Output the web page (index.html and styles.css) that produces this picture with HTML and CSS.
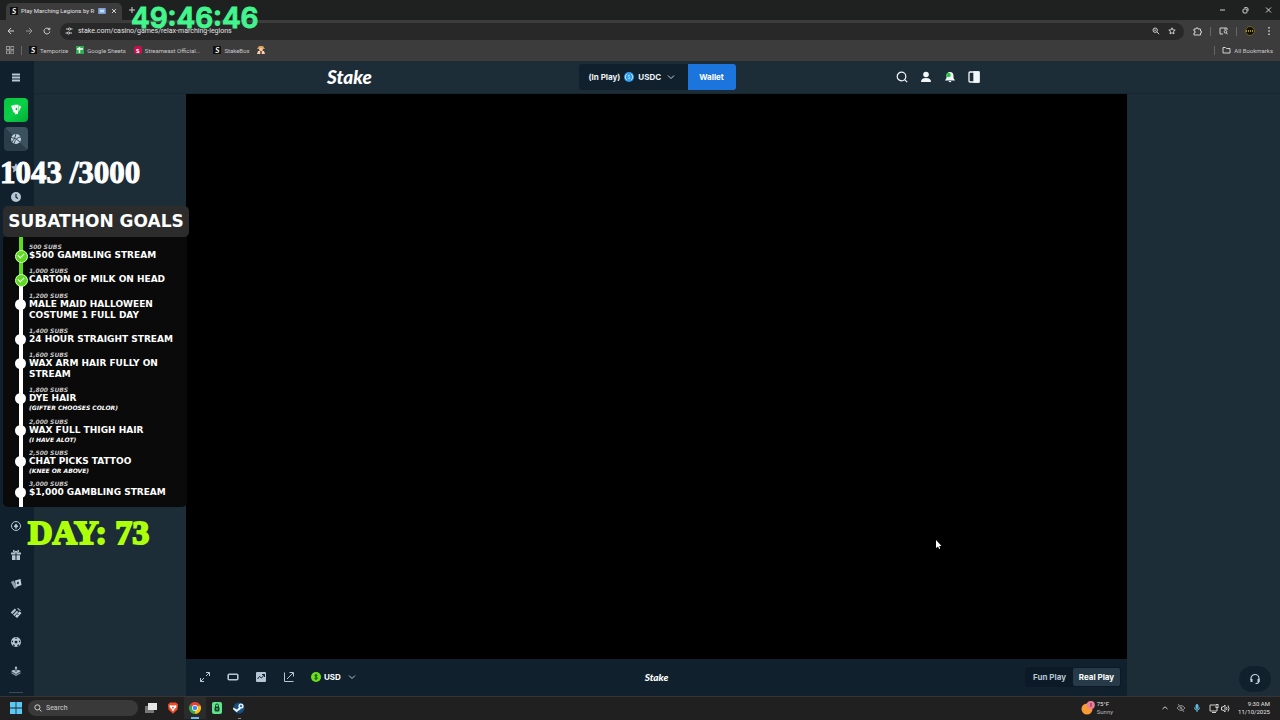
FILE: index.html
```html
<!DOCTYPE html>
<html lang="en">
<head>
    <meta charset="UTF-8">
    <meta name="viewport" content="width=device-width, initial-scale=1.0">
    <title>Play Marching Legions</title>
    <link rel="stylesheet" href="styles.css">
</head>
<body>
    <!-- Browser window -->
    <div class="tabs">
        <div class="tab">
            <span class="fav">S</span>
            <span class="tab-title">Play Marching Legions by R</span>
            <svg class="tab-badge" viewBox="0 0 9 7"><rect width="9" height="7" rx="1" fill="#7da2d6"/><rect x="2" y="2" width="5" height="3" fill="#c9dcf7"/></svg>
            <button class="plain" aria-label="Close tab"><svg width="6" height="6" viewBox="0 0 6 6"><path d="M1 1l4 4M5 1L1 5"/></svg></button>
        </div>
        <button class="plain new-tab" aria-label="New tab"><svg width="8" height="8" viewBox="0 0 8 8"><path d="M4 1v6M1 4h6"/></svg></button>
        <div class="window-buttons">
            <button class="plain" aria-label="Minimize"><svg width="7" height="8" viewBox="0 0 7 8"><path d="M1 4h5"/></svg></button>
            <button class="plain" aria-label="Restore"><svg width="7" height="8" viewBox="0 0 7 8"><rect x="1" y="3" width="4" height="4" rx="1"/><path d="M2.500 1.500h2a1.500 1.500 0 0 1 1.500 1.500v2"/></svg></button>
            <button class="plain" aria-label="Close"><svg width="7" height="8" viewBox="0 0 7 8"><path d="M1 1.500l5 5M6 1.500l-5 5"/></svg></button>
        </div>
    </div>

    <div class="toolbar">
        <button class="plain" aria-label="Back"><svg width="8" height="8" viewBox="0 0 8 8"><path d="M7 4H1M4 1L1 4l3 3"/></svg></button>
        <button class="plain dim" aria-label="Forward"><svg width="8" height="8" viewBox="0 0 8 8"><path d="M1 4h6M4 1l3 3-3 3"/></svg></button>
        <button class="plain" aria-label="Reload"><svg width="8" height="8" viewBox="0 0 8 8"><path d="M6.800 4.500A2.900 2.900 0 1 1 6 2M6.800 .7v2H4.800"/></svg></button>
        <div class="address">
            <svg width="8" height="8" viewBox="0 0 8 8"><path d="M1 2h2M6 2h1.500M.5 6H2M5 6h2"/><circle cx="4.500" cy="2" r="1.100"/><circle cx="3.500" cy="6" r="1.100"/></svg>
            <input class="url" type="text" aria-label="Address" value="stake.com/casino/games/relax-marching-legions">
            <button class="plain" aria-label="Zoom"><svg width="8" height="8" viewBox="0 0 8 8"><circle cx="3.200" cy="3.200" r="2.200"/><path d="M4.900 4.900L7.200 7.200M2.200 3.200h2"/></svg></button>
            <button class="plain" aria-label="Bookmark"><svg width="8" height="8" viewBox="0 0 8 8"><path d="M4 .8l.9 2.100 2.300.2-1.700 1.500.5 2.300-2-1.200-2 1.200.5-2.300L.8 3.100l2.300-.2z"/></svg></button>
        </div>
        <button class="plain" aria-label="Extensions"><svg width="9" height="9" viewBox="0 0 9 9"><path d="M1 2h2V1h2v1h2.500v2h.8v2h-.8v2H1V6h1V4H1z"/></svg></button>
        <span class="sep"></span>
        <button class="plain" aria-label="Search tabs"><svg width="9" height="8" viewBox="0 0 9 8"><path d="M4 7H1V1h7v2"/><circle cx="6.500" cy="4.800" r="1.300"/><path d="M7.300 5.700L8.500 7.300M6 1v2"/></svg></button>
        <span class="sep"></span>
        <button class="plain" aria-label="Profile"><svg width="10" height="10" viewBox="0 0 10 10"><circle cx="5" cy="5" r="4.500" fill="#15130d" stroke="#6f6420"/><path d="M1 5h8" stroke="#a6932c" stroke-width="2" stroke-dasharray="1 1"/></svg></button>
        <button class="plain" aria-label="Menu"><svg width="8" height="8" viewBox="0 0 8 8"><path d="M4 0v1.500M4 3.300v1.500M4 6.500V8" stroke-width="1.500"/></svg></button>
    </div>

    <nav class="bookmarks">
        <button class="plain dim" aria-label="Apps"><svg width="8" height="8" viewBox="0 0 8 8"><rect x=".5" y=".5" width="3" height="3"/><rect x="4.800" y=".5" width="3" height="3"/><rect x=".5" y="4.800" width="3" height="3"/><rect x="4.800" y="4.800" width="3" height="3"/></svg></button>
        <span class="sep"></span>
        <a href="#"><span class="fav">S</span>Temporize</a>
        <a href="#"><span class="fav sheets"><svg width="8" height="8" viewBox="0 0 8 8"><path d="M3.500 1v6M1 3h6" stroke="#fff" stroke-width="1.500"/></svg></span>Google Sheets</a>
        <a href="#"><span class="fav east">s</span>Streameast Official...</a>
        <a href="#" class="wide"><span class="fav">S</span>StakeBox</a>
        <a href="#" aria-label="Farmer"><svg width="8" height="8" viewBox="0 0 8 8" stroke="none"><path d="M2 0h4l2 3H0z" fill="#d3a25a"/><circle cx="4" cy="3.500" r="1.900" fill="#f0c69b"/><path d="M0 8l1-3h6l1 3z" fill="#e9d6c2"/><path d="M3 5h2v3H3z" fill="#b5502c"/></svg></a>
        <span class="sep push"></span>
        <a href="#" class="all"><svg width="9" height="8" viewBox="0 0 9 8"><path d="M1 1.500h2.500l1 1H8v4.500H1z"/></svg>All Bookmarks</a>
    </nav>

    <!-- Casino page -->
    <div class="page">
        <aside class="sidebar">
            <div class="side-group">
                <button class="plain burger" aria-label="Menu"><svg width="8" height="9" viewBox="0 0 8 9" stroke="#b6c6d4" stroke-width="2"><path d="M0 1.500h8M0 4.500h8M0 7.500h8"/></svg></button>
                <a href="#" class="tile casino" aria-label="Casino"><svg width="12" height="12" viewBox="0 0 12 12" stroke="none"><path d="M1 2l3-1 1 7-1 1zM4.300.8h4.200l-.5 9-3 .6zM9 1.500l2.200 1.200L8.500 8z" fill="#fff"/><path d="M6.500 3.500L7.600 5 6.500 6.500 5.400 5z" fill="#08b83f"/></svg></a>
                <a href="#" class="tile sports" aria-label="Sports"><svg width="12" height="12" viewBox="0 0 12 12" stroke="#354b58" stroke-width="1"><circle cx="6" cy="6" r="5" fill="#c4d2de" stroke="none"/><path d="M1 4.500q5 0 9 4.500M6 1q-1 5-4 8M11 4Q6 4 4 10.500"/></svg></a>
                <a href="#" class="item" aria-label="Favourites"><svg width="12" height="12" viewBox="0 0 12 12" stroke="none"><path d="M6 1l1.500 3 3.500.5-2.500 2.400.6 3.500L6 8.800 2.900 10.400l.6-3.500L1 4.500 4.500 4z" fill="#b1bad3"/></svg></a>
                <a href="#" class="item" aria-label="Recent"><svg width="12" height="12" viewBox="0 0 12 12"><circle cx="6" cy="6" r="5" fill="#b6c6d4" stroke="none"/><path d="M6 3v3.200L8 7.500" stroke="#10212d" stroke-width="1.200"/></svg></a>
            </div>
            <div class="side-group bottom">
                <a href="#" class="item" aria-label="Originals"><svg width="12" height="12" viewBox="0 0 12 12"><circle cx="6" cy="6" r="4.500" stroke="#b6c6d4"/><path d="M6 3.500l2 2.500q.3 1.500-1.500 1.200L7 8.500H5l.5-1.300Q3.700 7.500 4 6z" fill="#b6c6d4" stroke="none"/></svg></a>
                <a href="#" class="item" aria-label="Promotions"><svg width="12" height="12" viewBox="0 0 12 12" stroke="none"><path d="M1 3.500h4.500v2H1zM6.500 3.500H11v2H6.500zM2 6.300h3.500V11H2zM6.500 6.300H10V11H6.500z" fill="#b6c6d4"/><path d="M6 3.300L3.500 3V1.300L6 2.800l2.500-1.500V3z" stroke="#b6c6d4" fill="none"/></svg></a>
                <a href="#" class="item" aria-label="Cards"><svg width="12" height="12" viewBox="0 0 12 12" stroke="none"><path d="M.8 4l3-1.500 3 7-2.300 1.200z" fill="#8b9eae"/><path d="M5 2.500l5.500-1.500L11.500 7 6 9z" fill="#c4d2de"/><path d="M8 3.300l1 1.600-1 1.600-1.300-1.300z" fill="#10212d"/></svg></a>
                <a href="#" class="item" aria-label="Tickets"><svg width="12" height="12" viewBox="0 0 12 12" stroke="none"><path d="M.8 5.500l4-4 1.500 1.500-4 4zM3 7.700l4-4 1.300 1.300-4 4z" fill="#b6c6d4"/><path d="M5 9.200L9.500 4.500l2 1.500L7 11z" fill="#c4d2de"/><path d="M8 .8l3 2.500-1 1-3-2.500z" fill="#8b9eae"/><path d="M7.500 7l1 1" stroke="#10212d"/></svg></a>
                <a href="#" class="item" aria-label="Football"><svg width="12" height="12" viewBox="0 0 12 12" stroke="none"><circle cx="6" cy="6" r="5" fill="#b6c6d4"/><path d="M6 4.500l1.500 1-.5 1.800H5L4.500 5.500zM4.500 1.800h3L6 3zM1.500 5L3.200 4.500 2.800 6.800zM10.500 5l-1.700-.5.4 2.300zM3.500 8.200l1.300.8-.5 1.500-1.500-1.300zM8.500 8.200L7.200 9l.5 1.500 1.500-1.300z" fill="#10212d"/></svg></a>
                <a href="#" class="item" aria-label="Lobby"><svg width="12" height="12" viewBox="0 0 12 12" stroke="none"><path d="M6 1l1.500 2.500h-1V6h-1V3.500h-1z" fill="#c4d2de"/><path d="M1 6l3-1.200L6 7l2-2.200L11 6 6 9z" fill="#b6c6d4"/><path d="M1 8l5 3 5-3-1-.8-4 2.300-4-2.300z" fill="#8b9eae"/></svg></a>
                <span class="side-line"></span>
            </div>
        </aside>

        <main class="main">
            <header class="site-header">
                <div class="header-inner">
                    <a href="#" class="logo">Stake</a>
                    <div class="balance">
                        <button class="currency">(In Play)
                            <svg width="10" height="10" viewBox="0 0 10 10"><circle cx="5" cy="5" r="5" fill="#2f9df0" stroke="none"/><path d="M3 1.800a4 4 0 0 0 0 6.400M7 1.800a4 4 0 0 1 0 6.400M6 3.800q-.6-.8-1.500-.4-.7.700.5 1.600 1.400.8.4 1.600-.9.300-1.500-.4" stroke="#d7edff" stroke-width=".8"/></svg>
                            USDC
                            <svg class="chev" width="8" height="8" viewBox="0 0 8 8"><path d="M1 2.500l3 3 3-3"/></svg>
                        </button>
                        <button class="wallet">Wallet</button>
                    </div>
                    <div class="header-icons">
                        <button class="plain" aria-label="Search"><svg width="12" height="12" viewBox="0 0 12 12" stroke="#f2f7fa" stroke-width="1.200"><circle cx="5.500" cy="5.500" r="4.300"/><path d="M8.600 8.600l2.600 2.600"/></svg></button>
                        <button class="plain" aria-label="Account"><svg width="12" height="12" viewBox="0 0 12 12" stroke="none" fill="#f2f7fa"><circle cx="6" cy="3.500" r="2.800"/><path d="M1 11q0-4 5-4t5 4z"/></svg></button>
                        <button class="plain" aria-label="Notifications"><svg width="12" height="12" viewBox="0 0 12 12" stroke="none"><path d="M6 1q3.500 0 3.500 4v2L11 9.500H1L2.500 7V5Q2.500 1 6 1zM4.500 10h3q-1.500 2.500-3 0z" fill="#f2f7fa"/><circle cx="4.500" cy="4" r="2.300" fill="#27c941"/></svg></button>
                        <button class="plain" aria-label="Side panel"><svg width="12" height="12" viewBox="0 0 12 12" stroke="#f2f7fa" stroke-width="1.300"><rect x="1" y="1" width="10" height="10" rx="1"/><path d="M6 1h5v10H6z" fill="#f2f7fa"/></svg></button>
                    </div>
                </div>
            </header>

            <section class="game">
                <div class="screen"></div>
                <div class="game-bar">
                    <div class="game-tools">
                        <button class="plain" aria-label="Fullscreen"><svg width="12" height="12" viewBox="0 0 12 12"><path d="M7 1.500h3.500V5M10.500 1.500L7 5M5 10.500H1.500V7M1.500 10.500L5 7"/></svg></button>
                        <button class="plain" aria-label="Theatre mode"><svg width="12" height="12" viewBox="0 0 12 12" stroke-width="1.600"><rect x="1.200" y="3.200" width="9.600" height="5.600" rx="1"/></svg></button>
                        <button class="plain" aria-label="Live stats"><svg width="12" height="12" viewBox="0 0 12 12"><rect x="1" y="1" width="10" height="10" rx="1" fill="#b6c6d4" stroke="none"/><path d="M2.500 8l2-2.500 2 1.500 3-3.500M7 3.500h2.500V6" stroke="#10212d"/></svg></button>
                        <button class="plain" aria-label="Pop out"><svg width="12" height="12" viewBox="0 0 12 12"><path d="M1.500 1.500v9h9M4 8l6-6M6.500 1.500h4v4"/></svg></button>
                        <button class="usd">
                            <svg width="10" height="10" viewBox="0 0 10 10"><circle cx="5" cy="5" r="5" fill="#6be31c" stroke="none"/><path d="M6.600 3.500Q5 2.300 3.900 3.300q-.5 1 1.100 1.600 1.900.6 1.300 1.700Q5 7.600 3.400 6.400M5 1.800v6.400" stroke="#123b10" stroke-width=".8"/></svg>
                            USD
                            <svg class="chev" width="8" height="8" viewBox="0 0 8 8"><path d="M1 2.500l3 3 3-3"/></svg>
                        </button>
                    </div>
                    <span class="logo small">Stake</span>
                    <div class="mode">
                        <button>Fun Play</button>
                        <button class="active">Real Play</button>
                    </div>
                </div>
            </section>
            <button class="support" aria-label="Live support"><svg width="12" height="12" viewBox="0 0 12 12" stroke="#c4d2de" stroke-width="1.200"><path d="M2 7V5.500a4 4 0 0 1 8 0V8q0 2.500-3.500 2.500"/><path d="M2.500 6v3M9.500 6v3" stroke-width="2"/></svg></button>
        </main>
    </div>

    <!-- Windows taskbar -->
    <footer class="taskbar">
        <button class="plain" aria-label="Start"><svg width="12" height="12" viewBox="0 0 12 12" stroke="none" fill="#5cc8f5"><path d="M0 0h5.600v5.600H0zM6.400 0H12v5.600H6.400zM0 6.400h5.600V12H0zM6.400 6.400H12V12H6.400z"/></svg></button>
        <label class="search">
            <svg width="8" height="8" viewBox="0 0 8 8"><circle cx="3.400" cy="3.400" r="2.600"/><path d="M5.300 5.300l2.200 2.200"/></svg>
            <input type="text" placeholder="Search" aria-label="Search">
        </label>
        <div class="apps">
            <button class="plain" aria-label="Task view"><svg width="12" height="12" viewBox="0 0 12 12" stroke="none"><path d="M0 4h9v7H0z" fill="#777"/><path d="M3 1h9v7H3z" fill="#e6e6e6"/></svg></button>
            <button class="plain" aria-label="Brave"><svg width="12" height="12" viewBox="0 0 12 12" stroke="none"><path d="M3 .5h6l2 2-.5 5L6 11.800 1.500 7.500 1 2.500z" fill="#f04a26"/><path d="M3 3l1.500.5h3L9 3l.5 2L8 6.500 6 9.500 4 6.500 2.500 5z" fill="#fff"/><path d="M5 5h2L6 7.500z" fill="#f04a26"/></svg></button>
            <button class="plain running" aria-label="Chrome"><svg width="12" height="12" viewBox="0 0 12 12" stroke="none"><path d="M6 6L.8 3A6 6 0 0 1 11.200 3z" fill="#e94335"/><path d="M6 6l5.200-3A6 6 0 0 1 6 12z" fill="#fbbc05"/><path d="M6 6v6A6 6 0 0 1 .8 3z" fill="#34a853"/><circle cx="6" cy="6" r="2.900" fill="#fff"/><circle cx="6" cy="6" r="2.200" fill="#4285f4"/></svg></button>
            <button class="plain" aria-label="VPN"><svg width="12" height="12" viewBox="0 0 12 12" stroke="none"><rect x="1" width="10" height="12" rx="2" fill="#5fe38b"/><path d="M4.500 5V3.500a1.500 1.500 0 0 1 3 0V5" stroke="#17432a" fill="none"/><rect x="3.500" y="4.500" width="5" height="5" rx="1.500" fill="#17432a"/><path d="M6 6v2" stroke="#5fe38b"/></svg></button>
            <button class="plain open" aria-label="Steam"><svg width="12" height="12" viewBox="0 0 12 12" stroke="none"><circle cx="6" cy="6" r="5.500" fill="#164f86"/><circle cx="8" cy="4" r="2.600" fill="#f1f5f8"/><circle cx="8" cy="4" r="1.200" fill="#3b7ab0"/><path d="M0 5.500l4 2 2.500-2.500 1.500 2-3 2q-1.500 2-3-.2L.3 7.500z" fill="#f1f5f8"/></svg></button>
        </div>
        <div class="weather">
            <svg width="14" height="14" viewBox="0 0 14 14" stroke="none"><circle cx="6" cy="8" r="5.500" fill="#f99a35"/><circle cx="9.800" cy="4" r="4" fill="#ee7f9b"/><path d="M10 2v4" stroke="#842640"/></svg>
            <p>75°F<br><span>Sunny</span></p>
        </div>
        <div class="tray">
            <button class="plain" aria-label="Hidden icons"><svg width="8" height="8" viewBox="0 0 8 8"><path d="M1.500 5L4 2.800 6.500 5"/></svg></button>
            <svg class="dim" width="8" height="8" viewBox="0 0 8 8"><path d="M0 4q4-5 8 0-4 5-8 0zM1 0l6 8"/><circle cx="4" cy="4" r="1"/></svg>
            <svg width="8" height="8" viewBox="0 0 8 8" stroke="#65bfe6"><rect x="3" y=".5" width="2" height="4" rx="1" fill="#65bfe6"/><path d="M1.500 3.500q0 2.500 2.500 2.500t2.500-2.500M4 6v2"/></svg>
            <div class="status">
                <svg width="10" height="9" viewBox="0 0 10 9"><path d="M6 1H1v6h7V4M3 8.500h4"/><rect x="7" y=".5" width="2" height="3"/></svg>
                <svg width="9" height="9" viewBox="0 0 9 9"><path d="M.5 3h1.500l2-2v7L2 6H.5zM5.500 3q1 1.500 0 3M7 1.500q2 3 0 6"/></svg>
            </div>
            <p class="clock">9:30 AM<br>11/10/2025</p>
        </div>
    </footer>

    <!-- Stream overlays -->
    <div class="timer">49:46:46</div>
    <div class="sub-count">1043 /3000</div>
    <div class="goals">
        <h2>SUBATHON GOALS</h2>
        <ul>
            <li class="done"><small>500 SUBS</small><b>$500 GAMBLING STREAM</b></li>
            <li class="done"><small>1,000 SUBS</small><b>CARTON OF MILK ON HEAD</b></li>
            <li><small>1,200 SUBS</small><b>MALE MAID HALLOWEEN<br>COSTUME 1 FULL DAY</b></li>
            <li><small>1,400 SUBS</small><b>24 HOUR STRAIGHT STREAM</b></li>
            <li><small>1,600 SUBS</small><b>WAX ARM HAIR FULLY ON<br>STREAM</b></li>
            <li><small>1,800 SUBS</small><b>DYE HAIR</b><em>(GIFTER CHOOSES COLOR)</em></li>
            <li><small>2,000 SUBS</small><b>WAX FULL THIGH HAIR</b><em>(I HAVE ALOT)</em></li>
            <li><small>2,500 SUBS</small><b>CHAT PICKS TATTOO</b><em>(KNEE OR ABOVE)</em></li>
            <li><small>3,000 SUBS</small><b>$1,000 GAMBLING STREAM</b></li>
        </ul>
    </div>
    <div class="day">DAY: 73</div>
    <svg class="cursor" width="7" height="11" viewBox="0 0 7 11"><path d="M1 1v8l2-1.500L4.200 10l1-.5L4.200 7H6.500z" fill="#fff" stroke="none"/></svg>
</body>
</html>
```
FILE: styles.css
```css
* {
  box-sizing: border-box;
}

body {
  margin: 0;
  height: 100vh;
  display: flex;
  flex-direction: column;
  overflow: hidden;
  background: #1c2d38;
  color: #e3e3e3;
  font-family: Roboto, sans-serif;
  font-size: 7px;
}

button, input {
  font: inherit;
  color: inherit;
  border: 0;
  padding: 0;
  background: none;
}

a {
  color: inherit;
  text-decoration: none;
}

p {
  margin: 0;
}

svg {
  display: block;
  flex: none;
  fill: none;
  stroke: #d0d0d0;
}

/* the svg attributes win over the defaults above */
svg[stroke="none"] { stroke: none; }
svg[stroke="#b6c6d4"] { stroke: #b6c6d4; }
svg[stroke="#f2f7fa"] { stroke: #f2f7fa; }
svg[stroke="#c4d2de"] { stroke: #c4d2de; }
svg[stroke="#354b58"] { stroke: #354b58; }
svg[stroke="#65bfe6"] { stroke: #65bfe6; }
svg[fill="#f2f7fa"] { fill: #f2f7fa; }
svg[fill="#5cc8f5"] { fill: #5cc8f5; }

.plain {
  display: flex;
  align-items: center;
  justify-content: center;
  cursor: pointer;
}

.dim {
  opacity: 0.6;
}

.sep {
  width: 1px;
  height: 9px;
  margin: 0 -1px;
  background: #666;
}

/* Tab strip */
.tabs {
  display: flex;
  align-items: center;
  height: 20px;
  padding-left: 6px;
  background: #1f2120;
}

.tab {
  display: flex;
  align-items: center;
  align-self: flex-end;
  gap: 3px;
  width: 116px;
  height: 17px;
  padding: 0 5px 2px 4px;
  border-radius: 5px 5px 0 0;
  background: #3c3c3c;
}

.tab-title {
  flex: 1;
  white-space: nowrap;
  font-size: 6px;
}

.tab-badge {
  width: 8px;
  height: 6px;
  margin-right: 2px;
  stroke: none;
}

.new-tab {
  margin-left: 6px;
}

.window-buttons {
  display: flex;
  gap: 16px;
  margin-left: auto;
  padding-right: 8px;
}

.fav {
  display: flex;
  align-items: center;
  justify-content: center;
  width: 8px;
  height: 8px;
  background: #111;
  color: #fff;
  font: italic bold 8px/8px Lato, sans-serif;
}

.sheets {
  background: #2da94f;
}

.east {
  border-radius: 2px;
  background: #c2134f;
  font-style: normal;
}

/* Address row */
.toolbar {
  display: flex;
  align-items: center;
  gap: 9px;
  height: 22px;
  padding: 0 7px 0 6px;
  background: #3c3c3c;
}

.toolbar > .plain {
  min-width: 9px;
}

.address {
  flex: 1;
  display: flex;
  align-items: center;
  gap: 8px;
  height: 17px;
  padding: 0 8px 0 5px;
  border-radius: 9px;
  background: #282828;
}

.url {
  flex: 1;
  height: 17px;
  margin-left: -3px;
}

.bookmarks {
  display: flex;
  align-items: center;
  height: 19px;
  gap: 8px;
  padding: 0 7px 3px 6px;
  background: #3c3c3c;
  color: #c9c9c9;
  font-size: 6px;
}

.bookmarks a {
  display: flex;
  align-items: center;
  gap: 3px;
}

.bookmarks .wide {
  margin-left: 5px;
}

.bookmarks .push {
  margin-left: auto;
}

/* Page */
.page {
  flex: 1;
  display: flex;
  min-height: 0;
  font-family: Inter, sans-serif;
  font-size: 8px;
  font-weight: 700;
}

.sidebar {
  display: flex;
  flex-direction: column;
  justify-content: space-between;
  width: 34px;
  background: #10212d;
}

.side-group {
  display: flex;
  flex-direction: column;
  align-items: center;
  gap: 5px;
  padding-right: 2px;
}

.burger {
  height: 32px;
}

.tile, .item {
  display: flex;
  align-items: center;
  justify-content: center;
  width: 24px;
  height: 24px;
  border-radius: 4px;
}

.casino {
  background: linear-gradient(135deg, #07c43e, #0bd048 50%, #05ab38);
}

.sports {
  background: linear-gradient(45deg, #2b3d49 50%, #3b515d 51%);
}

.bottom {
  padding-bottom: 3px;
}

.side-line {
  width: 14px;
  height: 1px;
  margin-top: 4px;
  background: #3a4c58;
}

.main {
  position: relative;
  flex: 1;
  display: flex;
  flex-direction: column;
}

.site-header {
  height: 33px;
  border-bottom: 1px solid #172631;
}

.header-inner {
  display: grid;
  grid-template-columns: 1fr auto 1fr;
  align-items: center;
  max-width: 660px;
  height: 32px;
  margin: 0 auto;
}

.logo {
  color: #fff;
  font: italic 900 19px/24px Lato, sans-serif;
}

.balance {
  display: flex;
  height: 26px;
  color: #eef4f8;
}

.currency {
  display: flex;
  align-items: center;
  gap: 4px;
  width: 109px;
  padding: 0 10px;
  border-radius: 3px 0 0 3px;
  background: #10212d;
}

.chev {
  margin-left: 2px;
}

.wallet {
  width: 48px;
  border-radius: 0 3px 3px 0;
  background: #1c75dd;
  color: #fff;
}

.header-icons {
  display: flex;
  justify-content: flex-end;
  gap: 12px;
  padding-right: 7px;
}

.game {
  flex: 1;
  display: flex;
  flex-direction: column;
  margin: 0 153px 0 152px;
}

.screen {
  flex: 1;
  background: #000;
}

.game-bar {
  display: grid;
  grid-template-columns: 1fr auto 1fr;
  align-items: center;
  height: 37px;
  padding: 0 6px 2px;
  background: #10212d;
}

.game-tools {
  display: flex;
  align-items: center;
  gap: 16px;
  padding-left: 7px;
}

.game-tools svg {
  stroke: #b6c6d4;
}

.usd {
  display: flex;
  align-items: center;
  gap: 3px;
  color: #fff;
}

.usd .chev {
  margin-left: 4px;
}

.logo.small {
  font-size: 10px;
  line-height: 14px;
}

.mode {
  display: flex;
  justify-self: end;
  padding: 1px;
  border-radius: 3px;
  background: #0b1a26;
  color: #b6c6d4;
}

.mode button {
  width: 47px;
  height: 18px;
  border-radius: 2px;
}

.mode .active {
  background: #263b47;
  color: #fff;
}

.support {
  position: absolute;
  right: 9px;
  bottom: 4px;
  display: flex;
  align-items: center;
  justify-content: center;
  width: 32px;
  height: 26px;
  border-radius: 13px;
  background: #10212d;
}

/* Taskbar */
.taskbar {
  display: flex;
  align-items: center;
  height: 24px;
  padding: 0 10px 1px;
  border-top: 1px solid #363434;
  background: #202020;
}

.search {
  display: flex;
  align-items: center;
  gap: 4px;
  width: 110px;
  height: 16px;
  margin-left: 6px;
  padding-left: 6px;
  border-radius: 8px;
  background: #393939;
}

.search input {
  width: 80px;
}

.search input::placeholder {
  color: #d0d0d0;
}

.apps {
  display: flex;
  margin-left: 2px;
}

.apps .plain {
  width: 22px;
  height: 22px;
  border-bottom: 2px solid transparent;
  border-top: 2px solid transparent;
}

.apps .running {
  background: linear-gradient(#62bdea, #62bdea) 50% 100% / 8px 2px no-repeat #2b2b2b;
  background-origin: border-box;
}

.apps .open {
  background: linear-gradient(#888, #888) 50% 100% / 3px 1px no-repeat;
  background-origin: border-box;
}

.weather {
  display: flex;
  align-items: center;
  gap: 2px;
  margin-left: auto;
  font-size: 6px;
  line-height: 8px;
}

.weather span {
  color: #b5b5b5;
}

.tray {
  display: flex;
  align-items: center;
  gap: 8px;
  margin-left: 48px;
}

.status {
  display: flex;
  gap: 2px;
}

.clock {
  font-size: 6px;
  line-height: 8px;
  text-align: right;
}

/* Stream overlays */
.timer {
  position: absolute;
  left: 131px;
  top: 1px;
  color: #42f58d;
  font: 600 28px/34px Inter, sans-serif;
  -webkit-text-stroke: 1px #42f58d;
}

.sub-count {
  position: absolute;
  left: 0;
  top: 154px;
  color: #fff;
  font: bold 31px/38px "Liberation Serif", serif;
  -webkit-text-stroke: 1px #fff;
}

.day {
  position: absolute;
  left: 28px;
  top: 512px;
  color: #adff0a;
  font: bold 34px/42px "Liberation Serif", serif;
  -webkit-text-stroke: 2px #adff0a;
}

.goals {
  position: absolute;
  left: 3px;
  top: 206px;
  width: 186px;
  color: #fff;
  font-family: "DejaVu Sans", sans-serif;
}

.goals h2 {
  margin: 0;
  border-radius: 5px;
  background: #2c2c2c;
  font-size: 17px;
  line-height: 31px;
  text-align: center;
  white-space: nowrap;
}

.goals ul {
  display: flex;
  flex-direction: column;
  justify-content: space-between;
  height: 270px;
  margin: 0 2px 0 0;
  padding: 6px 0 9px 26px;
  list-style: none;
  border-radius: 0 0 5px 5px;
  background: linear-gradient(#5bdc1e 43px, #fff 43px) 16px 0 / 4px 100% no-repeat #0a0a0a;
}

.goals li {
  position: relative;
  white-space: nowrap;
}

.goals li::before {
  content: "";
  position: absolute;
  left: -14px;
  top: 7px;
  width: 11px;
  height: 11px;
  border-radius: 50%;
  background: #fff;
}

.goals .done::before {
  border: 1px solid #d8ffc4;
  background: #5bdc1e;
}

.goals .done::after {
  content: "";
  position: absolute;
  left: -11px;
  top: 10px;
  width: 5px;
  height: 3px;
  border: solid #fff;
  border-width: 0 0 1px 1px;
  transform: rotate(-45deg);
}

.goals small, .goals b, .goals em {
  display: block;
}

.goals small {
  color: #c4c4c4;
  font: italic bold 6px/7px "DejaVu Sans", sans-serif;
}

.goals b {
  font-size: 9px;
  line-height: 11px;
}

.goals em {
  font: italic bold 6px/7px "DejaVu Sans", sans-serif;
}

.cursor {
  position: absolute;
  left: 935px;
  top: 539px;
}
```
